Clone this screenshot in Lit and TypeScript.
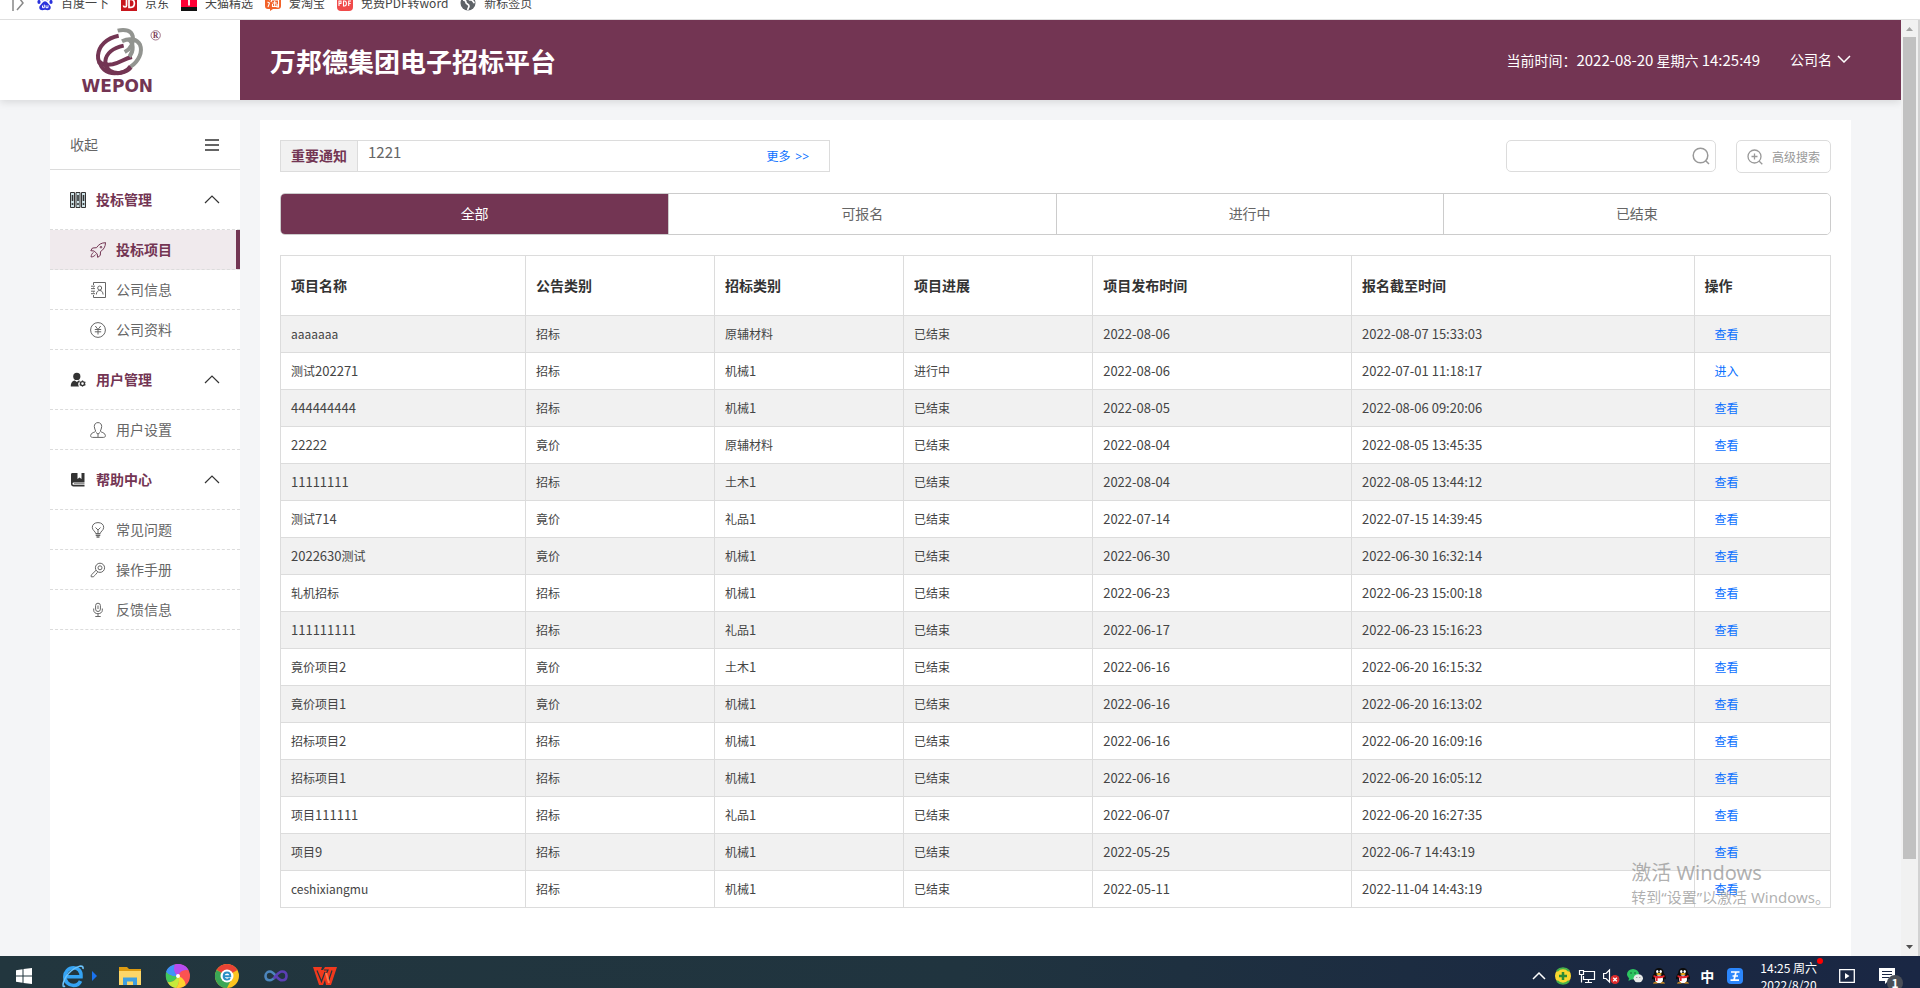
import { LitElement, html, css, svg } from "lit";
import { customElement, property, state } from "lit/decorators.js";
import { classMap } from "lit/directives/class-map.js";

const MENU_ICONS: Record<string, unknown> = {
  binders: svg`<g fill="#cfe3e8" stroke="#333"><path d="M.5.5h4v15h-4zM6 .5h4v15H6zM11.5.5h4v15h-4z"/></g><path d="M2.5 3v6M8 3v6M13.5 3v6" stroke="#333" stroke-width="1.6"/><g fill="#333"><circle cx="2.5" cy="12" r="1"/><circle cx="8" cy="12" r="1"/><circle cx="13.5" cy="12" r="1"/></g>`,
  admin: svg`<g fill="#333"><circle cx="6.800" cy="4.400" r="3.600"/><path d="M.8 14.500c0-4 1.600-5.500 4-6l2 1.600 2-1.600c.6.1 1 .3 1.300.5A4 4 0 0 0 9 14.500z"/></g><circle cx="12.500" cy="11.600" r="2" fill="none" stroke="#333" stroke-width="1.400"/><path d="M12.500 8.600v1M12.500 13.600v1M9.700 10l1 .5M14.400 12.700l1 .5M9.700 13.200l1-.5M14.400 10.500l1-.5" stroke="#333" stroke-width="1.300"/>`,
  book: svg`<path d="M2.500 1H7.500v6l2-1.500 2 1.500V1h3v9.500H4c-1 0-1.500.5-1.500 1.200s.5 1.100 1.500 1.100h10.500v1.700H3.500C2 14.500 1 13.500 1 12V2.500C1 1.500 1.500 1 2.500 1z" fill="#333"/><path d="M4 11.600h10.500" stroke="#333" stroke-width=".6"/>`,
  rocket: svg`<path d="M15.500.7c-4 0-7 1.800-9 5L2.500 6 .8 8.700l3.400.3 3 3 .5 3.400 2.600-2 .2-3.800c3.200-2 5-5 5-9z"/><circle cx="11" cy="5.200" r=".8"/><path d="M3.500 10.500c-1.600.8-2.200 2.500-2.400 4.500M5.600 12.500c-.8 1.400-2.400 2.300-4.400 2.500"/>`,
  contact: svg`<path d="M3.500 3V.5h12v15h-12V13M3.500 5.500v1M3.500 9.500v1M1 4.200h4M1 6.600h4M1 9.200h4M1 11.700h4"/><circle cx="9.700" cy="6" r="2"/><path d="M6.300 12.500c.2-2.500 1.300-4 3.400-4s3.200 1.500 3.400 4"/>`,
  yen: svg`<circle cx="8" cy="8" r="7.400"/><path d="M5.300 4l2.700 3.500L10.700 4M4.800 7.500h6.400M4.800 9.800h6.400M8 7.500v5"/>`,
  user: svg`<path d="M8 .6c2.500 0 3.700 1.800 3.700 4 0 2-1 3-1.400 4.600 0 1 5.100 1.300 5.100 4.300 0 1.500-.8 1.900-2 1.900H2.600c-1.200 0-2-.4-2-1.900 0-3 5.100-3.300 5.100-4.300C5.300 7.600 4.300 6.600 4.300 4.600c0-2.200 1.200-4 3.700-4z"/><path d="M6 10.500l2 1.500 2-1.500M8 12v3"/>`,
  bulb: svg`<path d="M5.700 11.500c0-2-3.400-3-3.400-6.200C2.300 2.500 4.700.6 8 .6s5.700 1.900 5.700 4.700c0 3.200-3.400 4.200-3.400 6.200z"/><path d="M5.500 5.500L8 8l2.500-2.500M8 8v3.500"/><path d="M5.700 13.300h4.600M6.500 15h3" stroke-width="1.500"/>`,
  key: svg`<circle cx="10" cy="5.800" r="4.600"/><circle cx="10" cy="5.800" r="2"/><path d="M6 8.300l-4.800 4.800v1.700h2.300l1-1.200 1.300-1.300 1.700-2"/>`,
  mic: svg`<rect x="5.600" y="1.200" width="4.800" height="8.300" rx="2.400"/><path d="M3.700 6.500v1.800c0 2 1.800 3.400 4.300 3.400s4.300-1.400 4.300-3.400V6.500M8 11.700v2.500M5.300 14.500h5.400M8 3.500v3.500"/>`,
};

interface MenuGroup {
  icon: string;
  label: string;
  items: { icon: string; label: string; active?: boolean }[];
}

const MENU: MenuGroup[] = [
  {
    icon: "binders",
    label: "投标管理",
    items: [
      { icon: "rocket", label: "投标项目", active: true },
      { icon: "contact", label: "公司信息" },
      { icon: "yen", label: "公司资料" },
    ],
  },
  { icon: "admin", label: "用户管理", items: [{ icon: "user", label: "用户设置" }] },
  {
    icon: "book",
    label: "帮助中心",
    items: [
      { icon: "bulb", label: "常见问题" },
      { icon: "key", label: "操作手册" },
      { icon: "mic", label: "反馈信息" },
    ],
  },
];

const COLUMNS: { label: string; width: string }[] = [
  { label: "项目名称", width: "15.8%" },
  { label: "公告类别", width: "12.2%" },
  { label: "招标类别", width: "12.2%" },
  { label: "项目进展", width: "12.2%" },
  { label: "项目发布时间", width: "16.7%" },
  { label: "报名截至时间", width: "22.1%" },
  { label: "操作", width: "8.8%" },
];

const ROWS: string[][] = [
  ["aaaaaaa", "招标", "原辅材料", "已结束", "2022-08-06", "2022-08-07 15:33:03", "查看"],
  ["测试202271", "招标", "机械1", "进行中", "2022-08-06", "2022-07-01 11:18:17", "进入"],
  ["444444444", "招标", "机械1", "已结束", "2022-08-05", "2022-08-06 09:20:06", "查看"],
  ["22222", "竟价", "原辅材料", "已结束", "2022-08-04", "2022-08-05 13:45:35", "查看"],
  ["11111111", "招标", "土木1", "已结束", "2022-08-04", "2022-08-05 13:44:12", "查看"],
  ["测试714", "竟价", "礼品1", "已结束", "2022-07-14", "2022-07-15 14:39:45", "查看"],
  ["2022630测试", "竟价", "机械1", "已结束", "2022-06-30", "2022-06-30 16:32:14", "查看"],
  ["轧机招标", "招标", "机械1", "已结束", "2022-06-23", "2022-06-23 15:00:18", "查看"],
  ["111111111", "招标", "礼品1", "已结束", "2022-06-17", "2022-06-23 15:16:23", "查看"],
  ["竟价项目2", "竟价", "土木1", "已结束", "2022-06-16", "2022-06-20 16:15:32", "查看"],
  ["竟价项目1", "竟价", "机械1", "已结束", "2022-06-16", "2022-06-20 16:13:02", "查看"],
  ["招标项目2", "招标", "机械1", "已结束", "2022-06-16", "2022-06-20 16:09:16", "查看"],
  ["招标项目1", "招标", "机械1", "已结束", "2022-06-16", "2022-06-20 16:05:12", "查看"],
  ["项目111111", "招标", "礼品1", "已结束", "2022-06-07", "2022-06-20 16:27:35", "查看"],
  ["项目9", "招标", "机械1", "已结束", "2022-05-25", "2022-06-7 14:43:19", "查看"],
  ["ceshixiangmu", "招标", "机械1", "已结束", "2022-05-11", "2022-11-04 14:43:19", "查看"],
];

const TABS = ["全部", "可报名", "进行中", "已结束"];

/* Digits are set one pixel larger than the surrounding Chinese text */
const withDigits = (text: string) =>
  text
    .split(/(\d[\d\s:-]*)/)
    .filter((part) => part)
    .map((part) => (/^\d/.test(part) ? html`<span class="num">${part}</span>` : part));

/* Browser bookmarks strip */
@customElement("bookmark-bar")
export class BookmarkBar extends LitElement {
  static styles = css`
    :host {
      display: block;
      flex: none;
      box-sizing: border-box;
      height: 20px;
      overflow: hidden;
      background: #fff;
      border-bottom: 1px solid #dfdfdf;
    }
    .row {
      display: flex;
      align-items: center;
      gap: 12px;
      height: 24px;
      margin-top: -9px;
      padding-left: 12px;
    }
    a {
      display: flex;
      align-items: center;
      gap: 8px;
      font-size: 12px;
      line-height: 16px;
      color: #444;
      text-decoration: none;
      white-space: nowrap;
    }
    svg {
      display: block;
      flex: none;
    }
  `;

  private marks = [
    { label: "百度一下", icon: svg`<g fill="#2a32dc"><ellipse cx="5.500" cy="3" rx="1.700" ry="2.300"/><ellipse cx="10.500" cy="3" rx="1.700" ry="2.300"/><ellipse cx="2" cy="7" rx="1.600" ry="2.100"/><ellipse cx="14" cy="7" rx="1.600" ry="2.100"/><path d="M8 6.200c2.200 0 3 2.600 4.700 4 2 1.800 1 5-2 5-1 0-1.700-.4-2.700-.4s-1.700.4-2.700.4c-3 0-4-3.200-2-5C5 8.800 5.800 6.200 8 6.200z"/></g><path d="M5.500 10.500v2.200h1.800V9.600M9 10.300v2.400h2v-2.400" fill="none" stroke="#fff"/>` },
    { label: "京东", icon: svg`<path d="M0 0h16v16H0z" fill="#c8161d"/><path d="M5.500 4v6.500c0 2-3 2-3 0M8 4.300v8h2c4.500 0 4.500-8 0-8z" fill="none" stroke="#fff" stroke-width="1.700"/>` },
    { label: "天猫精选", icon: svg`<path d="M0 0h16v16H0z" fill="#ff0036"/><path d="M0 12h16v4H0z" fill="#111"/><path d="M8 3v7.500M5 4h6" stroke="#fff" stroke-width="1.800"/>` },
    { label: "爱淘宝", icon: svg`<path d="M3 0h10a3 3 0 0 1 3 3v8a3 3 0 0 1-3 3H8l-3 2v-2H3a3 3 0 0 1-3-3V3a3 3 0 0 1 3-3z" fill="#f1622a"/><path d="M3 4l2 1M2.500 7l2 1-1.500 4M7 4l-1 3M7 5h6.500v7h-2M7.500 8h4.500M9.700 6v5M7.500 9v2.500h4.500V9" fill="none" stroke="#fff" stroke-width="1.100"/>` },
    { label: "免费PDF转word", icon: svg`<rect width="16" height="16" rx="4" fill="#f04a4a"/><path d="M2 11V6h2v2.500H2M6.500 6v5h1c2.500 0 2.500-5 0-5zM11.700 11V6H14M11.700 8.500h2" fill="none" stroke="#fff" stroke-width="1.100"/>` },
    { label: "新标签页", icon: svg`<circle cx="8" cy="8" r="7.500" fill="#5f6368"/><path d="M3 5c2 0 3 1 3 2.500S9 9 9 11s-1.500 2-1 4M9 2c-1 2 0 3 2 3s2 2 3.500 3" fill="none" stroke="#fff" stroke-width="1.700"/>` },
  ];

  render() {
    return html`<nav class="row" aria-label="书签">
      <svg width="13" height="16" viewBox="0 0 13 16"><path d="M1 0v16M5 0l6 8-6 7" fill="none" stroke="#888" stroke-width="1.500"/></svg>
      ${this.marks.map(
        (m) => html`<a href="#"><svg width="16" height="16" viewBox="0 0 16 16">${m.icon}</svg>${m.label}</a>`
      )}
    </nav>`;
  }
}

/* Maroon page header with the company logo */
@customElement("site-header")
export class SiteHeader extends LitElement {
  static styles = css`
    :host {
      display: flex;
      flex: none;
      height: 80px;
      background: #fff;
      box-shadow: 0 2px 8px rgba(0, 0, 0, 0.12);
      position: relative;
    }
    .logo {
      display: flex;
      justify-content: center;
      align-items: center;
      width: 240px;
    }
    .bar {
      flex: 1;
      display: flex;
      align-items: center;
      padding: 0 50px 0 30px;
      background: #733553;
      color: #fff;
    }
    h1 {
      flex: 1;
      margin: 0;
      padding-top: 2px;
      font-size: 26px;
      line-height: 40px;
      font-weight: 700;
    }
    .time {
      font-size: 14px;
      line-height: 24px;
      margin-right: 30px;
    }
    .num {
      font-size: 15px;
    }
    button {
      display: flex;
      align-items: center;
      gap: 5px;
      padding: 0 0 2px;
      border: 0;
      background: none;
      color: inherit;
      font: inherit;
      font-size: 14px;
      line-height: 24px;
    }
    .word {
      font: 700 51px "DejaVu Sans", sans-serif;
    }
    .mark {
      font: 700 22px "Liberation Serif", serif;
    }
  `;

  render() {
    return html`
      <div class="logo">
        <svg width="120" height="80" viewBox="0 0 360 240" role="img" aria-label="WEPON">
          <g fill="none" stroke="#733553" stroke-width="12">
            <path d="M176 47C140 54 116 78 114 106c-1 14 5 26 16 31"/>
            <path d="M191 77c-33 7-53 25-55 47 0 10 3 18 8 24"/>
            <path d="M216 111c-22 4-37 18-58 22-18 3-32 0-43-8"/>
            <path d="M213 142c-14 17-44 23-62 11-9-6-14-14-15-24"/>
            <path d="M118 122c4 22 20 38 46 38 22 0 38-7 48-22"/>
          </g>
          <g fill="none" stroke="#929490" stroke-width="12">
            <path d="M173 32c24-6 41 1 45 16 4 20-6 38-24 48"/>
            <path d="M186 64c24-12 46-6 54 10 9 22-4 50-28 66"/>
            <path d="M204 58c18 10 18 34 4 52"/>
          </g>
          <circle cx="287" cy="46" r="14" fill="none" stroke="#733553" stroke-width="2"/>
          <text class="mark" x="287" y="53" text-anchor="middle" fill="#733553">R</text>
          <text class="word" x="172" y="216" text-anchor="middle" fill="#733553">WEPON</text>
        </svg>
      </div>
      <div class="bar">
        <h1>万邦德集团电子招标平台</h1>
        <span class="time">当前时间：<span class="num">2022-08-20</span> 星期六 <span class="num">14:25:49</span></span>
        <button type="button">
          公司名
          <svg width="14" height="8" viewBox="0 0 14 8"><path d="M1 1l6 6 6-6" fill="none" stroke="#fff" stroke-width="1.500"/></svg>
        </button>
      </div>
    `;
  }
}

/* Collapsible navigation column */
@customElement("side-menu")
export class SideMenu extends LitElement {
  @property({ attribute: false }) groups: MenuGroup[] = MENU;

  static styles = css`
    :host {
      display: block;
      background: #fff;
      font-size: 14px;
      color: #666;
    }
    .fold,
    .group {
      display: flex;
      align-items: center;
      box-sizing: border-box;
      width: 100%;
      padding: 0 20px;
      border: 0;
      background: none;
      font: inherit;
      color: inherit;
      text-align: left;
    }
    .fold {
      height: 50px;
      border-bottom: 1px solid #dcdcdc;
    }
    .group {
      height: 60px;
      gap: 10px;
      color: #733553;
      font-weight: 700;
      border-bottom: 1px dashed #dcdcdc;
    }
    .label {
      padding-bottom: 2px;
    }
    .grow {
      flex: 1;
    }
    ul {
      margin: 0;
      padding: 0;
      list-style: none;
    }
    .item {
      display: flex;
      align-items: center;
      gap: 10px;
      box-sizing: border-box;
      height: 40px;
      padding-left: 40px;
      border-bottom: 1px dashed #dcdcdc;
      color: inherit;
      text-decoration: none;
    }
    .active {
      background: #f0eaed;
      color: #733553;
      font-weight: 700;
      box-shadow: inset -4px 0 #733553;
    }
    .line {
      fill: none;
      stroke: currentColor;
    }
  `;

  render() {
    return html`
      <button class="fold" type="button">
        <span class="label grow">收起</span>
        <svg width="16" height="12" viewBox="0 0 16 12"><path d="M1 1h14M1 6h14M1 11h14" stroke="#333" stroke-width="1.500"/></svg>
      </button>
      ${this.groups.map(
        (g) => html`
          <button class="group" type="button" aria-expanded="true">
            <svg width="16" height="16" viewBox="0 0 16 16">${MENU_ICONS[g.icon]}</svg>
            <span class="label grow">${g.label}</span>
            <svg width="16" height="9" viewBox="0 0 16 9"><path d="M1 8l7-7 7 7" fill="none" stroke="#333" stroke-width="1.200"/></svg>
          </button>
          <ul>
            ${g.items.map(
              (i) => html`<li>
                <a href="#" class=${classMap({ item: true, active: !!i.active })}>
                  <svg class="line" width="16" height="16" viewBox="0 0 16 16">${MENU_ICONS[i.icon]}</svg>
                  <span class="label">${i.label}</span>
                </a>
              </li>`
            )}
          </ul>
        `
      )}
    `;
  }
}

/* Notice line, filters and the tender table */
@customElement("tender-list")
export class TenderList extends LitElement {
  @state() private tab = 0;

  static styles = css`
    :host {
      display: block;
      padding: 20px;
      background: #fff;
      color: #444;
      font-size: 12px;
      line-height: 20px;
    }
    .top {
      display: flex;
      align-items: flex-start;
      gap: 20px;
      margin-bottom: 20px;
    }
    .notice {
      display: flex;
      box-sizing: border-box;
      width: 550px;
      height: 32px;
      border: 1px solid #dcdcdc;
    }
    .notice strong {
      padding: 0 10px;
      background: #f1f1f1;
      border-right: 1px solid #dcdcdc;
      color: #733553;
      font-size: 14px;
      line-height: 28px;
    }
    .notice .text {
      flex: 1;
      padding-left: 10px;
      font-size: 15px;
      line-height: 22px;
      color: #666;
    }
    .notice a {
      padding-right: 20px;
      line-height: 30px;
    }
    .arrows {
      padding-left: 2px;
      font-family: "Noto Sans", sans-serif;
      font-size: 12px;
    }
    a {
      color: #0a70ff;
      text-decoration: none;
    }
    .search {
      display: flex;
      align-items: center;
      box-sizing: border-box;
      width: 210px;
      height: 32px;
      margin-left: auto;
      padding-right: 5px;
      border: 1px solid #dcdcdc;
      border-radius: 5px;
    }
    input {
      flex: 1;
      min-width: 0;
      border: 0;
      outline: 0;
      background: none;
      font: inherit;
    }
    .search button {
      display: flex;
      padding: 0;
      border: 0;
      background: none;
    }
    .advanced {
      display: flex;
      align-items: center;
      gap: 9px;
      box-sizing: border-box;
      height: 33px;
      padding: 0 10px;
      border: 1px solid #dcdcdc;
      border-radius: 5px;
      background: #fff;
      color: #999;
      font: inherit;
    }
    .tabs {
      display: grid;
      grid-template-columns: repeat(4, 1fr);
      height: 40px;
      margin-bottom: 20px;
      border: 1px solid #ccc;
      border-radius: 5px;
      overflow: hidden;
    }
    .tab {
      padding: 0 0 2px;
      border: 0;
      background: #fff;
      color: #666;
      font: inherit;
      font-size: 14px;
    }
    .tab + .tab {
      border-left: 1px solid #ccc;
    }
    .tab.on {
      background: #733553;
      color: #fff;
    }
    table {
      width: 100%;
      table-layout: fixed;
      border-collapse: collapse;
    }
    th,
    td {
      box-sizing: border-box;
      height: 37px;
      padding: 0 10px;
      border: 1px solid #dcdcdc;
      text-align: left;
    }
    th {
      height: 60px;
      padding-bottom: 2px;
      color: #333;
      font-size: 14px;
      font-weight: 700;
    }
    tbody tr:nth-child(odd) {
      background: #f1f1f1;
    }
    .num {
      font-size: 13px;
    }
    .act {
      padding-left: 20px;
    }
  `;

  render() {
    return html`
      <div class="top">
        <div class="notice">
          <strong>重要通知</strong>
          <span class="text">1221</span>
          <a href="#">更多 <span class="arrows">&gt;&gt;</span></a>
        </div>
        <form class="search" role="search">
          <input type="text" aria-label="搜索" />
          <button type="button" aria-label="搜索">
            <svg width="18" height="18" viewBox="0 0 18 18"><g fill="none" stroke="#999" stroke-width="1.500"><circle cx="8.500" cy="8.500" r="7.300"/><path d="M13.500 13.500l3.500 3.500"/></g></svg>
          </button>
        </form>
        <button class="advanced" type="button">
          <svg width="16" height="16" viewBox="0 0 16 16"><g fill="none" stroke="#999" stroke-width="1.300"><circle cx="7.500" cy="7.500" r="6.500"/><path d="M12 12l3.300 3.300M4.500 7.500h6M7.500 4.500v6"/></g></svg>
          高级搜索
        </button>
      </div>
      <div class="tabs" role="tablist">
        ${TABS.map(
          (t, i) => html`<button
            type="button"
            role="tab"
            aria-selected=${i === this.tab}
            class=${classMap({ tab: true, on: i === this.tab })}
            @click=${() => (this.tab = i)}
          >${t}</button>`
        )}
      </div>
      <table>
        <colgroup>
          ${COLUMNS.map((c) => html`<col style="width:${c.width}" />`)}
        </colgroup>
        <thead>
          <tr>${COLUMNS.map((c) => html`<th scope="col">${c.label}</th>`)}</tr>
        </thead>
        <tbody>
          ${ROWS.map(
            (r) => html`<tr>
              ${r.map((v, i) =>
                i === 6
                  ? html`<td class="act"><a href="#">${v}</a></td>`
                  : html`<td>${withDigits(v)}</td>`
              )}
            </tr>`
          )}
        </tbody>
      </table>
    `;
  }
}

/* Windows task bar */
@customElement("task-bar")
export class TaskBar extends LitElement {
  static styles = css`
    :host {
      display: flex;
      flex: none;
      justify-content: space-between;
      height: 32px;
      overflow: hidden;
      background: linear-gradient(90deg, #22363e, #20343f 50%, #1a2842 85%, #1a2744);
      color: #fff;
    }
    .apps,
    .tray {
      display: flex;
      align-items: center;
      padding-top: 8px;
    }
    .apps {
      gap: 24px;
      padding-left: 12px;
    }
    .tray {
      gap: 8px;
      padding-right: 25px;
    }
    button {
      display: flex;
      justify-content: center;
      flex: none;
      padding: 0;
      border: 0;
      background: none;
      color: inherit;
      font: inherit;
    }
    .ime {
      width: 16px;
      margin-right: 4px;
      font-size: 14px;
      font-weight: 700;
      line-height: 16px;
    }
    .clock {
      position: relative;
      display: block;
      margin: 0 14px 0 9px;
      text-align: center;
      font-size: 12px;
      line-height: 17px;
    }
    .clock::after {
      content: "";
      position: absolute;
      top: -1px;
      right: -6px;
      width: 6px;
      height: 6px;
      border-radius: 50%;
      background: #f00;
    }
    .news {
      position: relative;
      margin-left: 16px;
    }
    .badge {
      position: absolute;
      left: 8px;
      top: 7px;
      width: 16px;
      height: 16px;
      border-radius: 50%;
      background: #4a4f58;
      font-size: 12px;
      font-weight: 700;
      line-height: 16px;
      text-align: center;
    }
    svg {
      display: block;
      overflow: visible;
    }
  `;

  private apps = [
    { name: "开始", width: 24, art: svg`<path d="M4 6.300l6.500-1v6.200H4zM11.500 5.100L20 4v7.500h-8.500zM4 12.500h6.500v6.200l-6.500-1zM11.500 12.500H20V20l-8.500-1.100z" fill="#fff"/>` },
    { name: "Internet Explorer", width: 34, art: svg`<path d="M6.500 12.800h14.500c.5-6-3-9-7.500-9-5 0-8.700 4-8.700 9s4 8.700 8.700 8.700c3 0 5.800-1.500 7-4.500" fill="none" stroke="#35a4f4" stroke-width="3.600"/><path d="M5 22C1 25 3 14 11 7c6-5 13-7 12-2" fill="none" stroke="#6cc3fb" stroke-width="1.600"/><path d="M32 7v10l5-5z" fill="#1a73f0"/>` },
    { name: "文件资源管理器", width: 24, art: svg`<path d="M1 3h8l2 2h12v16H1z" fill="#dd9b11"/><path d="M1 7h22v14H1z" fill="#fcd668"/><path d="M5 13.500h14V21h-4v-3.500H9V21H5z" fill="#3f9fe0"/>` },
    { name: "360浏览器", width: 25, art: svg`<circle cx="12" cy="12" r="12" fill="#fb5252"/><g stroke="none"><path d="M12 12C8 9 6 4 9 .4 14-1 21 1 22.500 6.500 18 5 14 7 12 12z" fill="#b64cf0"/><path d="M12 12C7 13 2 11 0 8 1 4 5 1 9 .4 7 4 8 9 12 12z" fill="#3f93f8"/><path d="M12 12c-2 4-6 7-10.500 6C-.5 15-.5 11 0 8c3 3 7 5 12 4z" fill="#41c95c"/><path d="M12 12c2 4 1 9-2 12-4-.3-7-3-8.500-6C6 19 10 16 12 12z" fill="#c6ea3c"/><path d="M12 12c4 1 8 5 7.500 9.500-3 2-6 2.700-9.500 2.500 3-3 4-8 2-12z" fill="#fdd22f"/></g><circle cx="12" cy="12" r="2" fill="#fff"/>` },
    { name: "Chrome", width: 25, art: svg`<circle cx="12" cy="12" r="12" fill="#fcc31e"/><path d="M12 12L1.600 6A12 12 0 0 1 22.400 6z" fill="#ea4335"/><path d="M12 12L1.600 6A12 12 0 0 0 12 24l4-8z" fill="#3ba755"/><circle cx="12" cy="12" r="6.500" fill="#fff"/><path d="M8.500 12.300h6.800c0-5-6.300-5-6.700-.3 0 4.200 5 4.500 6.300 2" fill="none" stroke="#2a8fc4" stroke-width="1.900"/>` },
    { name: "Visual Studio", width: 25, art: svg`<path d="M12 12c-2.500-3-4-4.500-6-4.500S1.500 9 1.500 12s2 4.300 4.300 4.300S9.500 15 12 12" fill="none" stroke="#4d86bd" stroke-width="2.600"/><path d="M9.500 14.500C13 11 14.500 7.500 18 7.500s4.500 2 4.500 4.500-1.500 4.300-4.300 4.300S14 14.500 12 12" fill="none" stroke="#5c3fb4" stroke-width="2.600"/>` },
    { name: "WPS", width: 25, art: svg`<path d="M0 3h9l-1 3h2l2-3h12l-6 18h-5l-1-5-2 5H6z" fill="#f2391d"/><path d="M4 6.500l4.500 11L12 8M11 6h4l-1.500 3M15.500 17L19 6.500" fill="none" stroke="#22363e" stroke-width="1.200"/><path d="M13 9l3 10" stroke="#ff7a4d" stroke-width="2"/>` },
  ];

  private penguin = svg`<path d="M8 0c3.300 0 4.700 2.300 4.700 5 1.600 2 2.700 4.500 2.300 6.500l-1.500-1c-1 4-2.500 5-5.500 5s-4.500-1-5.500-5l-1.500 1C.6 9.500 1.700 7 3.300 5 3.300 2.300 4.700 0 8 0z" fill="#0b0b0b"/><ellipse cx="8" cy="11.300" rx="4" ry="4" fill="#fff"/><ellipse cx="6.300" cy="3.600" rx="1.200" ry="1.500" fill="#fff"/><ellipse cx="9.700" cy="3.600" rx="1.200" ry="1.500" fill="#fff"/><ellipse cx="8" cy="6" rx="2.700" ry=".9" fill="#f8b51c"/><path d="M2.700 7c3 1.600 7.600 1.600 10.600 0l.3 2c-2.500 1.200-5 1.300-7 1.200V13h-2v-3.200l-2.100-.8z" fill="#e3222c"/><path d="M2 15.500c1-2 4-1 5 0zM9 15.500c1-1 4-2 5 0z" fill="#f8a51c"/>`;

  private tray = [
    { name: "显示隐藏的图标", art: svg`<path d="M2 11l6-6 6 6" fill="none" stroke="#fff" stroke-width="1.500"/>` },
    { name: "安全卫士", art: svg`<circle cx="8" cy="8" r="8" fill="#f9d72f"/><path d="M2 13a8 8 0 0 0 12 0M2 3a8 8 0 0 1 12 0" fill="none" stroke="#46b04a" stroke-width="2"/><path d="M8 4v8M4 8h8" stroke="#2b8b35" stroke-width="2.500"/>` },
    { name: "网络", art: svg`<path d="M5 3.500h10.500v8H4.500V8M9.500 11.500v3M6 14.500h7M.5 2.500h4v4h-4zM2.500 6.500v8" fill="none" stroke="#fff" stroke-width="1.200"/>` },
    { name: "音量", art: svg`<path d="M.6 5.500H3L6.500 2v12L3 10.500H.6z" fill="none" stroke="#fff" stroke-width="1.200"/><circle cx="12" cy="11.500" r="4.500" fill="#dd2b2b"/><path d="M10.200 9.700l3.600 3.600M13.800 9.700l-3.600 3.600" stroke="#fff" stroke-width="1.300"/>` },
    { name: "微信", art: svg`<ellipse cx="6" cy="6.300" rx="6" ry="5.300" fill="#2dc560"/><path d="M2 10l-.5 3L5 11z" fill="#2dc560"/><ellipse cx="11.300" cy="10.300" rx="4.700" ry="4" fill="#e8eae9"/><g fill="#145c2e"><circle cx="4" cy="5" r=".8"/><circle cx="8" cy="5" r=".8"/></g><g fill="#777"><circle cx="9.800" cy="9.500" r=".6"/><circle cx="12.800" cy="9.500" r=".6"/></g>` },
    { name: "QQ", art: this.penguin },
    { name: "QQ", art: this.penguin },
  ];

  render() {
    return html`
      <div class="apps">
        ${this.apps.map(
          (a) => html`<button type="button" aria-label=${a.name}><svg width=${a.width} height="24" viewBox="0 0 ${a.width} 24">${a.art}</svg></button>`
        )}
      </div>
      <div class="tray">
        ${this.tray.map(
          (a) => html`<button type="button" aria-label=${a.name}><svg width="16" height="16" viewBox="0 0 16 16">${a.art}</svg></button>`
        )}
        <button type="button" class="ime">中</button>
        <button type="button" aria-label="输入法">
          <svg width="16" height="16" viewBox="0 0 16 16"><rect width="16" height="16" rx="4" fill="#2b86fb"/><path d="M4 4h8.500M3.500 12.200h8.500M5.500 8h5.500M9 4L7 12" fill="none" stroke="#fff" stroke-width="1.700"/></svg>
        </button>
        <button type="button" class="clock">14:25 周六<br />2022/8/20</button>
        <button type="button" aria-label="播放">
          <svg width="16" height="16" viewBox="0 0 16 16"><path d="M.7 1.700h14.600v12.600H.7z" fill="none" stroke="#fff" stroke-width="1.300"/><path d="M6 5v6l4.500-3z" fill="#fff"/></svg>
        </button>
        <button type="button" class="news" aria-label="通知">
          <svg width="16" height="16" viewBox="0 0 16 16"><path d="M0 0h16v13H9l-3 3v-3H0z" fill="#fff"/><path d="M3 3.500h10M3 6.500h10M3 9.500h7" stroke="#1a2744" stroke-width="1.200"/></svg>
          <span class="badge">1</span>
        </button>
      </div>
    `;
  }
}

@customElement("app-root")
export class AppRoot extends LitElement {
  static styles = css`
    :host {
      display: flex;
      flex-direction: column;
      position: relative;
      height: 100vh;
      overflow: hidden;
      font-family: "Noto Sans CJK SC", sans-serif;
      background: #f4f5f7;
    }
    .view {
      flex: 1;
      display: flex;
      min-height: 0;
    }
    .page {
      flex: 1;
      display: flex;
      flex-direction: column;
      min-width: 0;
      overflow: hidden;
    }
    .body {
      flex: 1;
      display: grid;
      grid-template-columns: 190px minmax(0, 1fr);
      gap: 20px;
      padding: 20px 50px 0;
    }
    .scroll {
      display: flex;
      flex-direction: column;
      align-items: center;
      box-sizing: border-box;
      width: 19px;
      background: #f1f1f1;
      border-right: 2px solid #d2d2d2;
    }
    .scroll svg {
      flex: none;
    }
    .thumb {
      flex: 822;
      width: 13px;
      background: #c1c1c1;
    }
    .rest {
      flex: 80;
    }
    .watermark {
      position: absolute;
      right: 90px;
      bottom: 79px;
      color: rgba(150, 150, 150, 0.75);
      font-family: "Noto Sans", "Noto Sans CJK SC", sans-serif;
      font-size: 15px;
      line-height: 24px;
      pointer-events: none;
    }
    .big {
      font-size: 20px;
    }
  `;

  render() {
    return html`
      <bookmark-bar></bookmark-bar>
      <div class="view">
        <div class="page">
          <site-header></site-header>
          <div class="body">
            <side-menu></side-menu>
            <tender-list></tender-list>
          </div>
        </div>
        <div class="scroll" aria-hidden="true">
          <svg width="17" height="17" viewBox="0 0 17 17"><path d="M5 11l3.500-4 3.500 4z" fill="#a3a3a3"/></svg>
          <div class="thumb"></div>
          <div class="rest"></div>
          <svg width="17" height="17" viewBox="0 0 17 17"><path d="M5 6l3.500 4L12 6z" fill="#505050"/></svg>
        </div>
      </div>
      <task-bar></task-bar>
      <div class="watermark">
        <div class="big">激活 Windows</div>
        <div>转到“设置”以激活 Windows。</div>
      </div>
    `;
  }
}
